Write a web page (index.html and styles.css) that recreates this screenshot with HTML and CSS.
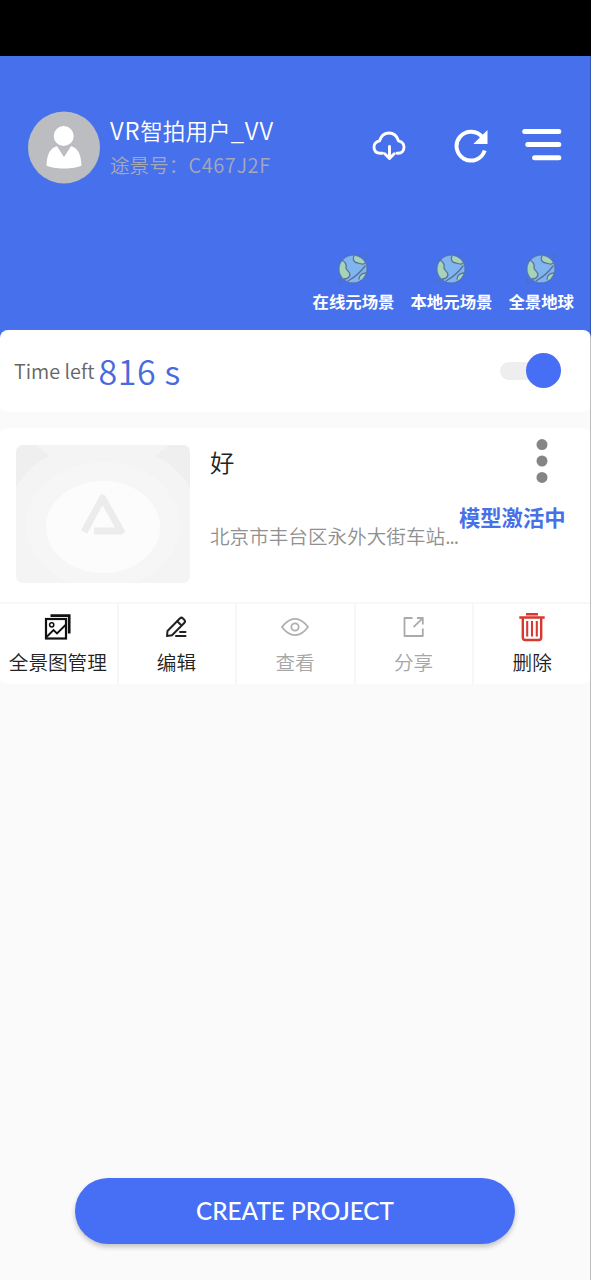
FILE: index.html
```html
<!DOCTYPE html>
<html lang="zh-CN">
<head>
<meta charset="utf-8">
<title>VR</title>
<link rel="stylesheet" href="styles.css">
</head>
<body>
<svg class="defs" width="0" height="0">
  <symbol id="globe" viewBox="0 0 32 32">
    <circle cx="16" cy="16" r="13.800" fill="#80b5ef"/>
    <path d="M5 8C8 9 10 11 9 14C8 17 13 18 13 22C12 25 8 26 6 26C1 20 1 13 5 8Z" fill="#a5d5b6"/>
    <path d="M17 3C15 6 17 10 21 10C24 11 27 12 29 11C27 6 22 3 17 3ZM29 20C26 20 22 22 22 26L25 27Z" fill="#a5d5b6"/>
    <g fill="none" stroke="#59709c" stroke-width="1.300" stroke-linecap="round">
      <path d="M5 7C8 9 10 11 9 14C8 17 13 18 13 22C12 25 9 26 7 26M17 3C15 6 17 10 21 10C24 11 27 12 28 10M22 26C22 22 26 20 29 20"/>
      <path d="M28 13C23 20 18 24 11 28"/>
      <path d="M27 2H30V5M2 27V30H5" stroke-opacity=".5"/>
      <circle cx="16" cy="16" r="14" stroke-opacity=".65"/>
    </g>
  </symbol>
</svg>
<div class="screen">
  <div class="status-bar"></div>
  <header class="header">
    <div class="profile">
      <svg class="avatar" viewBox="0 0 72 72">
        <circle cx="36" cy="36" r="36" fill="#bcbdc1"/>
        <circle cx="35.700" cy="24.500" r="10" fill="#fff"/>
        <path d="M18.500 54C19 43 22 36.500 29 34.800L36 45.500L43 34.800C50 36.500 53 43 53.500 54C47 58 25 58 18.500 54Z" fill="#fff"/>
        <path d="M30.500 36Q36 38.500 41.500 36L36 45Z" fill="#bcbdc1"/>
      </svg>
      <div class="identity">
        <div class="user-name"><span class="latin">VR</span>智拍用户<span class="latin">_VV</span></div>
        <div class="user-id">途景号：<span class="code">C467J2F</span></div>
      </div>
      <div class="tools">
        <svg class="tool cloud" viewBox="0 0 34 30" fill="none" stroke="#fff" stroke-width="2.900" stroke-linecap="round" stroke-linejoin="round">
          <path d="M10.500 22.300H8.500C4 22.300 2 19.500 2 16C2 12.500 4.500 10.500 7.500 9.800C9 5 12.500 2 17 2C21.500 2 25 5 26.500 9.800C29.500 10.500 32 12.500 32 16C32 19.500 30 22.300 26 22.300H25"/>
          <path d="M17.500 15.500V27M12.800 22.800L17.500 27.500L22.200 22.800"/>
        </svg>
        <svg class="tool refresh" viewBox="0 0 34 34">
          <path d="M28.500 8.500A14.400 14.400 0 1 0 30.700 21.500" fill="none" stroke="#fff" stroke-width="4"/>
          <path d="M33.500 1V15H19.300Z" fill="#fff"/>
        </svg>
        <svg class="tool menu" viewBox="0 0 40 32" fill="none" stroke="#fff" stroke-width="5" stroke-linecap="round">
          <path d="M2.700 2.500H36.800M5.800 15.500H36.800M12.600 28.800H36.800"/>
        </svg>
      </div>
    </div>
    <nav class="scenes">
      <a class="scene"><svg class="globe"><use href="#globe"/></svg><span>在线元场景</span></a>
      <a class="scene"><svg class="globe"><use href="#globe"/></svg><span>本地元场景</span></a>
      <a class="scene"><svg class="globe"><use href="#globe"/></svg><span>全景地球</span></a>
    </nav>
  </header>
  <div class="timer-wrap">
    <section class="timer">
      <span class="timer-label">Time left</span>
      <span class="timer-value">816 s</span>
      <span class="switch"><span class="knob"></span></span>
    </section>
  </div>
  <section class="project">
    <div class="summary">
      <svg class="thumb" viewBox="0 0 174 138">
        <rect width="174" height="138" fill="#f4f4f5"/>
        <path d="M0 0H20L34 11Q12 21 0 43ZM174 0H153L139 11Q161 21 174 43Z" fill="#efeff0"/>
        <ellipse cx="87" cy="80" rx="77" ry="63" fill="#f6f6f7"/>
        <ellipse cx="87" cy="82" rx="57" ry="46" fill="#fcfcfd"/>
        <path d="M68 87L86.500 53L105 86H78" fill="none" stroke="#ececed" stroke-width="7" stroke-linejoin="round"/>
      </svg>
      <div class="details">
        <div class="project-name">好</div>
        <div class="address">北京市丰台区永外大街车站<span class="dots">...</span></div>
      </div>
      <div class="side">
        <svg class="more" viewBox="0 0 12 44" fill="#858585"><circle cx="6" cy="5.600" r="5.500"/><circle cx="6" cy="22" r="5.500"/><circle cx="6" cy="38.400" r="5.500"/></svg>
        <div class="state">模型激活中</div>
      </div>
    </div>
    <div class="actions">
      <div class="action">
        <svg class="action-icon" viewBox="0 0 30 30" fill="none" stroke="#111" stroke-width="2.200">
          <rect x="3" y="7" width="20" height="19.500"/><circle cx="8.700" cy="12.800" r="2.100" stroke-width="1.500"/>
          <path d="M3 25.500L10.500 18L14 21.500L22.500 13" stroke-width="1.900"/><path d="M7.500 3.700H26.200V21.500" stroke-width="2.700"/>
        </svg><span>全景图管理</span>
      </div>
      <div class="action">
        <svg class="action-icon" viewBox="0 0 30 30" fill="none" stroke="#222" stroke-width="2" stroke-linejoin="round" stroke-linecap="round">
          <path d="M6 24L6.500 19L19 6.200Q20.500 5 22 6.500L23.500 8Q24.700 9.500 23.200 11L11 23.300ZM16 9L20.500 13.500M19 20H24.500M15 24H24.500"/>
        </svg><span>编辑</span>
      </div>
      <div class="action muted">
        <svg class="action-icon" viewBox="0 0 30 30" fill="none" stroke="#b0b0b0" stroke-width="1.800">
          <path d="M2 15Q8 6.800 15 6.800T28 15Q22 23.200 15 23.200T2 15Z"/><circle cx="15" cy="15" r="3.700"/>
        </svg><span>查看</span>
      </div>
      <div class="action muted">
        <svg class="action-icon" viewBox="0 0 30 30" fill="none" stroke="#aaa" stroke-width="1.800" stroke-linejoin="round">
          <path d="M13.500 6H5.500V24H23.800V16.500M18 6H23.800V12.500M23.500 6.300L14.500 15.200"/>
        </svg><span>分享</span>
      </div>
      <div class="action">
        <svg class="action-icon" viewBox="0 0 30 30" fill="none" stroke="#d8382f" stroke-width="2.400">
          <path d="M9 2.200H21M2.300 5.500H27.700"/><path d="M5.800 6V25.500Q5.800 28 8.300 28H21.800Q24.200 28 24.200 25.500V6"/><path d="M10.200 9V24.500M15 9V24.500M19.800 9V24.500" stroke-width="2.100"/>
        </svg><span>删除</span>
      </div>
    </div>
  </section>
  <footer class="footer"><button class="create">CREATE PROJECT</button></footer>
  <div class="edge"></div>
</div>
</body>
</html>
```
FILE: styles.css
```css
* { box-sizing: border-box; }
body { margin: 0; font-family: "Noto Sans CJK SC", sans-serif; font-weight: 350; }
svg { display: block; flex: none; }
.defs { position: absolute; }
.screen { position: relative; display: flex; flex-direction: column; width: 591px; height: 1280px; background: #fafafa; overflow: hidden; white-space: nowrap; }
.status-bar { height: 56px; background: #000; }
.header { height: 274px; padding: 55px 17px 0 28px; background: #4770ec; color: #fff; }
.profile { display: flex; height: 74px; }
.avatar { width: 72px; height: 73px; }
.identity { margin-left: 10px; padding-top: 3px; }
.user-name { font-size: 22.600px; line-height: 34px; }
.latin { font-size: 24px; line-height: 1; letter-spacing: .8px; }
.user-id { font-size: 19.600px; line-height: 34px; color: #a5a8b8; }
.code { font-size: 20px; letter-spacing: .6px; }
.tools { display: flex; margin-left: auto; padding: 18px 12px 0 0; }
.cloud { width: 34px; height: 30px; margin-top: 2px; }
.refresh { width: 34px; height: 34px; margin-left: 48px; }
.menu { width: 40px; height: 32px; margin-left: 34px; }
.scenes { display: flex; justify-content: flex-end; gap: 16px; padding-top: 68px; }
.scene { display: flex; flex-direction: column; align-items: center; font-size: 16.400px; line-height: 24px; font-weight: 700; }
.globe { width: 32px; height: 32px; margin-bottom: 4px; }
.scene:first-child .globe { margin-right: 2px; }
.timer-wrap { background: linear-gradient(#4770ec 10px, #fafafa 10px); }
.timer { display: flex; align-items: center; height: 82px; padding: 0 30px 1px 14px; border-radius: 8px; background: #fff; }
.timer-label { font-size: 19.800px; color: #666; }
.timer-value { margin-left: 4px; font-size: 34px; line-height: 40px; color: #476ade; letter-spacing: .6px; }
.switch { display: flex; justify-content: flex-end; align-items: center; width: 61px; height: 18px; margin-left: auto; border-radius: 9px; background: #eee; }
.knob { width: 35px; height: 35px; border-radius: 50%; background: #466ff5; flex: none; }
.project { margin-top: 16px; border-radius: 8px; background: #fff; overflow: hidden; }
.summary { display: flex; height: 174px; padding: 17px 25px 0 16px; }
.thumb { width: 174px; height: 138px; border-radius: 7px; }
.details { width: 249px; margin-left: 20px; }
.project-name { font-size: 24.400px; line-height: 33px; color: #222; }
.address { margin-top: 44px; font-size: 19.600px; line-height: 28px; color: #909090; }
.dots { letter-spacing: -1px; }
.side { display: flex; flex-direction: column; align-items: flex-end; margin-top: -6px; }
.more { width: 12px; height: 44px; margin-right: 18px; }
.state { margin-top: 19px; font-size: 21.300px; line-height: 30px; font-weight: 700; color: #4770e8; }
.actions { display: grid; grid-template-columns: repeat(5, 1fr); gap: 2px; padding-top: 2px; background: #f7f7f7; }
.action { display: flex; flex-direction: column; align-items: center; height: 80px; padding: 8px 1px 0 0; background: #fff; font-size: 19.600px; line-height: 28px; color: #222; }
.action-icon { width: 30px; height: 30px; margin-bottom: 6px; }
.muted { color: #a6a6a6; }
.footer { display: flex; justify-content: center; margin-top: auto; padding: 0 1px 36px 0; }
.create { width: 440px; height: 66px; border: 0; border-radius: 33px; background: #466ff5; color: #fff; font: 500 24.300px Lato, sans-serif; padding-bottom: 3px; box-shadow: 0 3px 5px rgba(0, 0, 0, .22); }
.edge { position: absolute; top: 56px; right: 0; bottom: 0; width: 1px; background: rgba(0, 0, 0, .24); }
```
